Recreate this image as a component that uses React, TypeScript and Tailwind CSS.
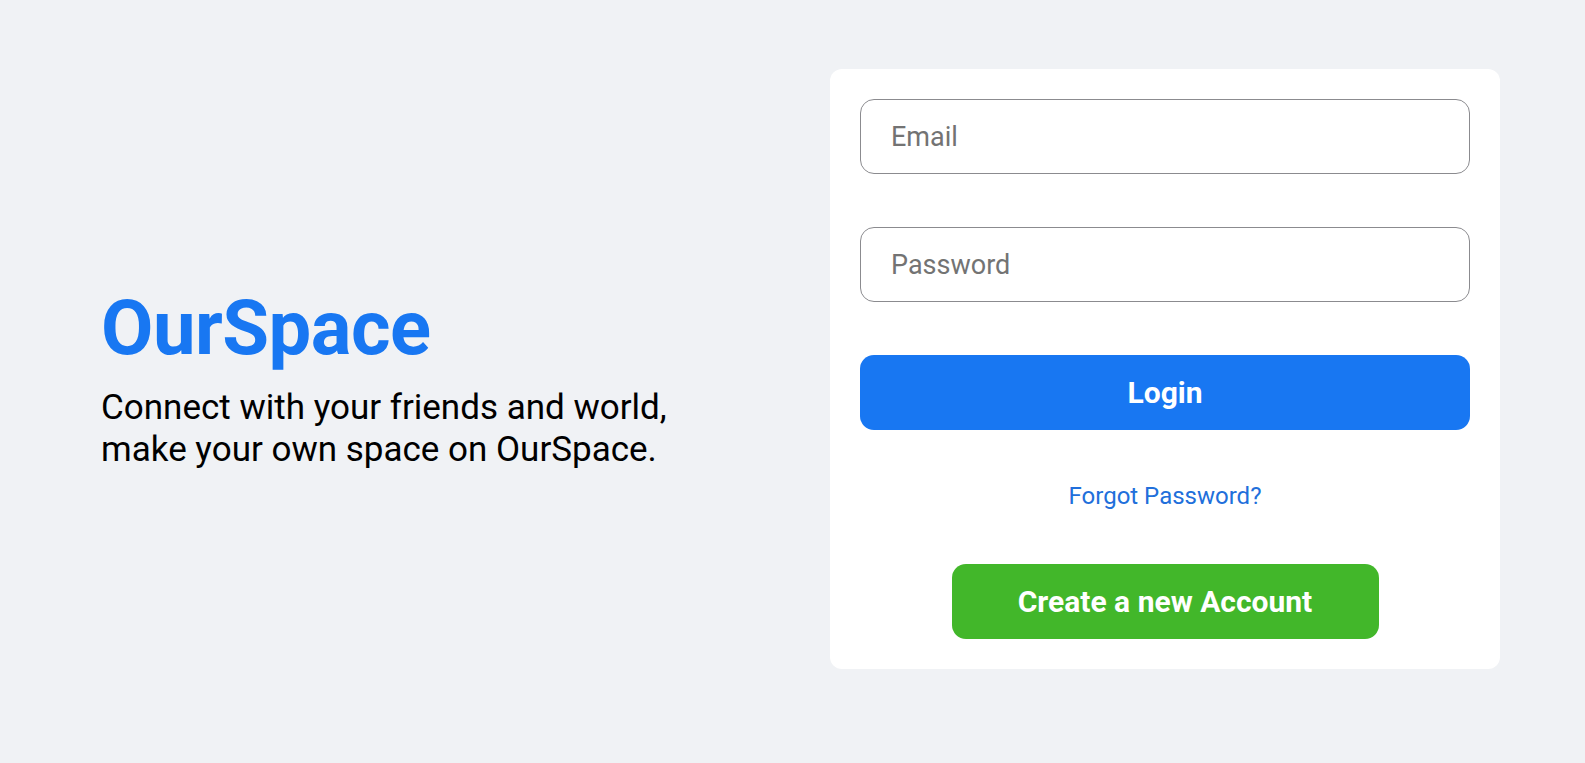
import React from "react";

export default function App() {
  return (
    <div className="min-h-screen w-full bg-[#f0f2f5] font-['Roboto',sans-serif]">
      <div className="flex items-center pt-[69px] pl-[101px]">
        <div className="w-[729px] shrink-0 pt-[23px]">
          <h1 className="text-[76px] font-bold leading-none text-[#1877f2] tracking-[-0.5px]">OurSpace</h1>
          <p className="mt-[21px] text-[35px] leading-[42px] text-black">
            Connect with your friends and world,
            <br />
            make your own space on OurSpace.
          </p>
        </div>
        <div className="w-[670px] rounded-[12px] bg-white p-[30px]">
          <input
            type="text"
            placeholder="Email"
            className="block h-[75px] w-full rounded-[14px] border border-[#8b8b8f] px-[30px] text-[27px] text-black placeholder:text-[#737373] outline-none"
          />
          <input
            type="password"
            placeholder="Password"
            className="mt-[53px] block h-[75px] w-full rounded-[14px] border border-[#8b8b8f] px-[30px] text-[27px] text-black placeholder:text-[#737373] outline-none"
          />
          <button className="mt-[53px] block h-[75px] w-full rounded-[14px] bg-[#1877f2] text-[30px] font-bold text-white">
            Login
          </button>
          <div className="mt-[52px] text-center text-[24px] leading-[28px] text-[#216fdb]">Forgot Password?</div>
          <div className="mt-[54px] flex justify-center">
            <button className="h-[75px] w-[427px] rounded-[14px] bg-[#42b72a] text-[30px] font-bold text-white">
              Create a new Account
            </button>
          </div>
        </div>
      </div>
    </div>
  );
}
